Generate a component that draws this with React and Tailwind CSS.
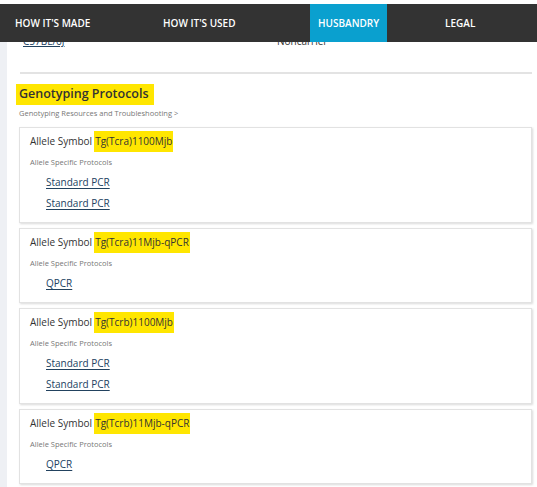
import React from 'react';

const nav = [
  { label: "HOW IT'S MADE", active: false, w: 'w-[148px]', pad: 'pl-[15px]' },
  { label: "HOW IT'S USED", active: false, w: 'w-[162px]', pad: 'pl-[15px]' },
  { label: 'HUSBANDRY', active: true, w: 'w-[77px]', pad: 'pl-[8px]' },
  { label: 'LEGAL', active: false, w: 'flex-1', pad: 'pl-[58px]' },
];

const alleles = [
  { symbol: 'Tg(Tcra)1100Mjb', links: ['Standard PCR', 'Standard PCR'] },
  { symbol: 'Tg(Tcra)11Mjb-qPCR', links: ['QPCR'] },
  { symbol: 'Tg(Tcrb)1100Mjb', links: ['Standard PCR', 'Standard PCR'] },
  { symbol: 'Tg(Tcrb)11Mjb-qPCR', links: ['QPCR'] },
];

function AlleleCard({ symbol, links }) {
  return (
    <div className="border border-[#e2e2e2] bg-white shadow-[1px_1px_2px_rgba(0,0,0,0.15)] px-[10px] pt-[3px] pb-[12px]">
      <div className="flex items-center h-[21px] text-[10px] text-[#333]">
        <span>Allele Symbol</span>
        <span className="ml-[2px] bg-[#ffe600] px-[1px] h-[21px] flex items-center">{symbol}</span>
      </div>
      <div className="text-[7.5px] text-[#777] mt-[5px] leading-[10px]">Allele Specific Protocols</div>
      <div className="pl-[16px] mt-[8px] flex flex-col gap-[7px]">
        {links.map((l, i) => (
          <a key={i} className="text-[10px] leading-[14px] text-[#22425f] underline underline-offset-2 w-fit">
            {l}
          </a>
        ))}
      </div>
    </div>
  );
}

export default function App() {
  return (
    <div className="w-[537px] h-[487px] overflow-hidden bg-white font-['Open_Sans',sans-serif]">
      <div className="h-[4px] bg-white" />
      <nav className="h-[38px] bg-[#333] flex">
        {nav.map((n) => (
          <div
            key={n.label}
            className={`${n.w} ${n.pad} flex items-center text-[10px] font-semibold text-white ${n.active ? 'bg-[#0aa0cf]' : ''}`}
          >
            {n.label}
          </div>
        ))}
      </nav>
      <div className="flex">
        <div className="w-[7px] bg-[#eef0f4] shrink-0" />
        <div className="flex-1 pl-[12px] pr-[5px] pb-[10px]">
          <div className="h-[7px] overflow-hidden flex text-[10px] text-[#333]">
            <a className="-mt-[8px] ml-[4px] text-[#22425f] underline w-[254px]">C57BL/6J</a>
            <span className="-mt-[8px]">Noncarrier</span>
          </div>
          <div className="mt-[23px] border-t-2 border-[#e3e3e3] ml-[1px]" />
          <div className="mt-[10px] flex">
            <h2 className="bg-[#ffe600] -ml-[3px] pl-[3px] pr-[5px] h-[21px] flex items-center text-[12.5px] font-semibold text-[#333]">
              Genotyping Protocols
            </h2>
          </div>
          <div className="text-[7.5px] text-[#777] mt-[2px] leading-[12px]">Genotyping Resources and Troubleshooting &gt;</div>
          <div className="mt-[8px] flex flex-col gap-[5px]">
            {alleles.map((a) => (
              <AlleleCard key={a.symbol} {...a} />
            ))}
          </div>
        </div>
      </div>
    </div>
  );
}
